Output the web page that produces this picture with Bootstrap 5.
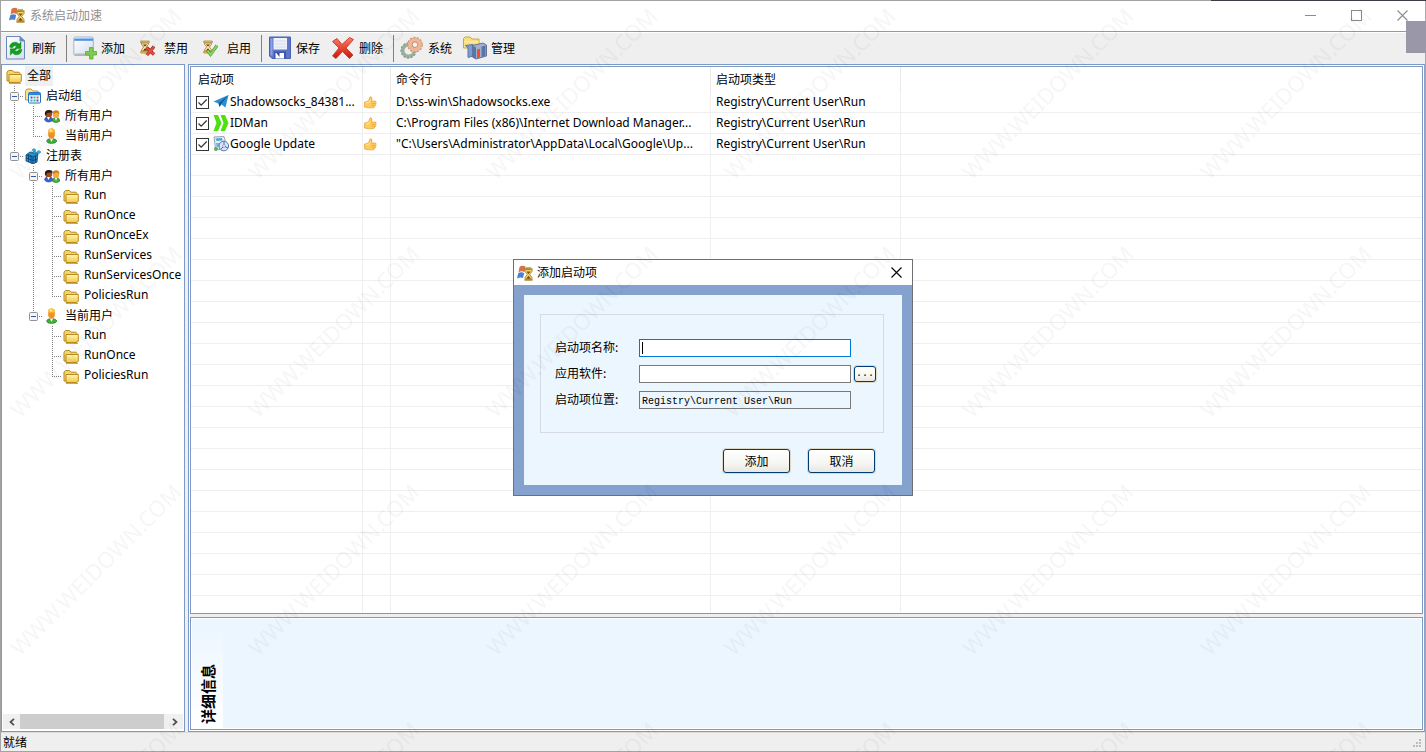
<!DOCTYPE html>
<html lang="zh-CN">
<head>
<meta charset="utf-8">
<meta name="viewport" content="width=device-width, initial-scale=1">
<title>系统启动加速</title>
<link href="https://cdn.jsdelivr.net/npm/bootstrap@5.3.0/dist/css/bootstrap.min.css" rel="stylesheet">
<style>
  :root { --edge: #7c99c6; --face: #efefef; --pale: #ebf6ff; --rule: #efefef; }
  body { font: 12px/20px "Noto Sans", "Noto Sans CJK SC", sans-serif; color: #000; background: var(--face); }
  svg { display: block; flex: none; }
  .zh { font-family: "Noto Sans CJK SC", sans-serif; }
  .app { border: 1px solid #a3a3a3; border-right-color: #a9a9ab; }

  .titlebar { height: 31px; background: #fff; border-bottom: 1px solid #999; color: #8f8f8f; }
  .caption { gap: 5px; padding: 0 0 2px 8px; }
  .winbtn { width: 46px; height: 28px; border: 0; background: none; padding: 0; display: flex; align-items: center; justify-content: center; }
  .toolbar-strip { height: 32px; border-top: 1px solid #fff; }
  .tool { border: 0; background: none; padding: 0 5px 0 6px; display: flex; align-items: center; gap: 4px; height: 29px; color: #000; }
  .tool:first-child { padding-left: 3px; }
  .tool-sep { width: 1px; height: 27px; background: #808080; margin: 2px 0 0 5px; }
  .side-mark { position: absolute; right: 0; top: 21px; width: 20px; height: 32px; background: #9997a8; }
  .top-mark { position: absolute; right: 0; top: 0; width: 215px; height: 1px; background: #3d3a44; }

  .sidebar { width: 184px; border: 1px solid var(--edge); background: #fff; }
  .tree { padding: 1px 0 0 3px; overflow: hidden; }
  .tree li { display: flex; align-items: center; height: 20px; white-space: nowrap; }
  .tree li > svg { margin: 0 5px 0 1px; }
  .tree a { color: #000; text-decoration: none; height: 20px; line-height: 18px; }
  .tree .picked { background: #efefef; padding: 0 2px; margin-left: -2px; }
  .ln { flex: none; width: 19px; height: 20px; display: flex; align-items: center; justify-content: center;
        --v: repeating-linear-gradient(#808080 0 1px, transparent 1px 2px) 9px 0;
        --h: repeating-linear-gradient(90deg, #808080 0 1px, transparent 1px 2px) 9px 10px / 10px 1px no-repeat; }
  .ln-v { background: var(--v) / 1px 100% no-repeat; }
  .ln-t { background: var(--v) / 1px 100% no-repeat, var(--h); }
  .ln-l { background: var(--v) / 1px 50% no-repeat, var(--h); }
  .knob { border: 0; padding: 0; background: none; }
  .hscroll { height: 15px; margin: 0 1px 2px; background: #f0f0f0; }
  .hscroll button { width: 17px; height: 15px; border: 0; padding: 0; background: none; display: flex; align-items: center; justify-content: center; }
  .thumb { background: #cdcdcd; margin-right: 2px; }

  .workarea { border: 1px solid var(--edge); border-right-color: #8aa3ca; padding: 1px; background: #fff; margin: 0 0 0 3px; }
  .listbox { border: 1px solid var(--edge); background: #fff; }
  .items { table-layout: fixed; width: 100%; border-collapse: separate; border-spacing: 0; }
  .items th { font-weight: 400; height: 25px; padding: 0 5px 2px; border-right: 1px solid #e9e9e9; }
  .items td { height: 21px; padding: 0 0 0 5px; border-right: 1px solid var(--rule); border-bottom: 1px solid var(--rule); white-space: nowrap; overflow: hidden; }
  .items th:last-child, .items td:last-child { border-right: 0; }
  .items th:first-child { padding-left: 7px; }
  .c1 { width: 172px; } .c2 { width: 28px; } .c3 { width: 320px; } .c4 { width: 190px; }
  .items .thumbcell { padding-left: 1px; }
  .items input { appearance: none; width: 13px; height: 13px; margin: 0 4px 0 0; border: 1px solid #333; background: #fff; flex: none; }
  .items input:checked { background: #fff url("data:image/svg+xml,%3Csvg xmlns='http://www.w3.org/2000/svg' viewBox='0 0 11 11'%3E%3Cpath d='M1.5 5.5l2.7 2.7L9.7 2.5' fill='none' stroke='%23333' stroke-width='1.2'/%3E%3C/svg%3E"); }
  .items label { display: flex; align-items: center; height: 20px; line-height: 20px; }
  .items label svg { margin-right: 1px; }
  .blankgrid { margin-bottom: 1px; background:
      linear-gradient(var(--rule) 0 0) 171px 0 / 1px 100% no-repeat,
      linear-gradient(var(--rule) 0 0) 199px 0 / 1px 100% no-repeat,
      linear-gradient(var(--rule) 0 0) 519px 0 / 1px 100% no-repeat,
      linear-gradient(var(--rule) 0 0) 709px 0 / 1px 100% no-repeat,
      repeating-linear-gradient(transparent 0 20px, var(--rule) 20px 21px); }
  .splitter { height: 3px; background: var(--face); }
  .details { height: 113px; border: 1px solid var(--edge); padding: 1px; background: #fff; }
  .details-body { background: var(--pale); }
  .details-tab { width: 31px; background: linear-gradient(var(--pale), #fff); }
  .details-tab span { writing-mode: vertical-rl; text-orientation: sideways; transform: rotate(180deg); font-size: 15px; font-weight: 700; line-height: 15px; padding: 4px 0; }

  .statusbar { height: 19px; border-top: 1px solid #ddd; padding-left: 2px; }

  .dialog-layer { position: absolute; inset: 3px 0 0 0; display: flex; align-items: center; justify-content: center; }
  .dlg { width: 400px; border: 1px solid #6e7076; background: #fff; }
  .dlg-title { height: 25px; padding-left: 3px; }
  .dlg-title button { width: 31px; height: 25px; border: 0; padding: 0; background: none; display: flex; align-items: center; justify-content: center; }
  .dlg-title span { line-height: 18px; padding-bottom: 2px; }
  .dlg-frame { border: 10px solid #85a1ce; background: var(--pale); padding: 19px 18px 12px 16px; }
  .dlg fieldset { border: 1px solid #d5dbe0; padding: 24px 7px 23px 14px; }
  .field { display: flex; align-items: center; height: 18px; margin-bottom: 8px; }
  .field:last-child { margin-bottom: 0; }
  .field label { width: 84px; line-height: 16px; padding-bottom: 2px; }
  .field input { width: 212px; height: 18px; border: 1px solid #7a7a7a; border-radius: 0; padding: 2px 2px 0; background: #fff; font: 10px/14px "Liberation Mono", monospace; color: #000; outline: 0; }
  .field input:read-only { background: #ebf6ff; }
  .field input.current { border-color: #0078d7; background: linear-gradient(#000 0 0) 2px 2px / 1px 12px no-repeat #fff; caret-color: transparent; }
  .xpbtn { border: 1px solid #003c74; border-radius: 3px; background: linear-gradient(#fff, #f6f6f3 60%, #e9e7e2); color: #000; padding: 0; box-shadow: 0 0 0 1px #ddd9c8; line-height: 16px; }
  .xpbtn-wide { width: 67px; height: 24px; }
  .xpbtn-dots { width: 22px; height: 16px; margin-left: 3px; font: 10px/14px "Liberation Mono", monospace; }
  .dlg-actions { gap: 18px; margin: 16px 9px 0 0; }
  .watermark { position: absolute; inset: 0; width: 100%; height: 100%; pointer-events: none; }
  .watermark text { font: 22px "Noto Sans", sans-serif; }
</style>
</head>
<body>
<svg width="0" height="0" class="position-absolute" aria-hidden="true">
  <defs>
    <linearGradient id="gold" x1="0" y1="0" x2="0" y2="1"><stop offset="0" stop-color="#fff6b4"/><stop offset="1" stop-color="#f2c84e"/></linearGradient>
    <linearGradient id="redg" x1="0" y1="0" x2="0" y2="1"><stop offset="0" stop-color="#ff7a60"/><stop offset="1" stop-color="#c8160c"/></linearGradient>
    <linearGradient id="sky" x1="0" y1="0" x2="1" y2="1"><stop offset="0" stop-color="#fff"/><stop offset="1" stop-color="#d3deef"/></linearGradient>
    <symbol id="i-folder" viewBox="0 0 16 16"><path d="M1 13V4.200L2.500 2.500H6.500L8 4.200H13L14 5.500V13z" fill="#f2d573" stroke="#b98a1c"/><path d="M3 6.500H15.300V13L14 14.500H3z" fill="url(#gold)" stroke="#b98a1c"/><path d="M3 15.500H15" stroke="#9a938a" stroke-width=".8"/></symbol>
    <symbol id="i-group" viewBox="0 0 16 16"><path d="M.5 12V3L2 1H6L8 3H13V12z" fill="#fbe48c" stroke="#c59a2e"/><rect x="3.500" y="4.500" width="12" height="10.500" rx="1" fill="#fff" stroke="#2371c4"/><path d="M3.500 6H15.500" stroke="#2f86e0" stroke-width="2.500"/><path d="M5.500 8.500h2v2h-2zM11.500 11.500h2v2h-2z" fill="#2d62c0"/><path d="M8.500 8.500h2v2h-2zM5.500 11.500h2v2h-2z" fill="#3aa3d8"/><path d="M11.500 8.500h2v2h-2z" fill="#e05a3a"/><path d="M8.500 11.500h2v2h-2z" fill="#4bb04b"/></symbol>
    <symbol id="i-users" viewBox="0 0 16 16"><path d="M.5 12Q1 8.500 4.500 8.500T9 12Q7 14 4.500 14T.5 12" fill="#3a62d8" stroke="#1a3690" stroke-width=".6"/><path d="M8 13Q8.500 9.500 12 9.500T16 13Q14 14.500 12 14.500T8 13" fill="#42b03a" stroke="#1f7a1c" stroke-width=".6"/><circle cx="4.700" cy="6" r="3.500" fill="#a04c1e"/><path d="M.8 6Q.8 1.800 5 2T8.500 5L7 4.500 3 5 2 8z" fill="#2c1a12"/><ellipse cx="12" cy="6.700" rx="3.200" ry="3.700" fill="#f5a94a"/><path d="M8.700 6Q8.500 2.400 12 2.300T15.400 6L13 4.500z" fill="#d08212"/><path d="M3 9l1.500 3L6 9M11 10l1 3 1-3" fill="#fff"/></symbol>
    <symbol id="i-user" viewBox="0 0 16 16"><path d="M2.500 13Q3 10.500 7.500 10.500T13 13Q12 15.500 7.500 15.500T2.500 13" fill="#3fae38" stroke="#1f7a1c" stroke-width=".6"/><path d="M5.800 10h3.400L7.500 14z" fill="#fff"/><path d="M4.200 3.500Q4 .5 7.500 .5T10.800 3.500V8Q9.500 11 7.500 11T4.200 8z" fill="#f0922a"/><path d="M4 4Q4 .5 7.500 .5T11 4Q7.500 5 4 4" fill="#fbc832"/><circle cx="7" cy="2.500" r="1.100" fill="#fff0a0"/></symbol>
    <symbol id="i-registry" viewBox="0 0 16 16"><path d="M1 7l4-3 8 1-1 9-4 2-7-3z" fill="#2a8ecb" stroke="#0c4a80" stroke-width=".8"/><path d="M1 10l7 2.500L12 11M1.500 7L8 9l5-2.500M3.500 6v8M6 7v8M8 9v7M10.500 8v7" stroke="#0d3e70" stroke-width=".8" fill="none"/><path d="M7 2l2-1.500L11 2 9 3.500zM12 3.500l2-1 2 1.500-2 1.500zM8 4l2-1 1 1.500-2 1z" fill="#35c0ee" stroke="#0c6aa8" stroke-width=".5"/></symbol>
    <symbol id="i-app" viewBox="0 0 16 16"><path d="M2.500 2Q5 0 8.500 1.500L7.500 7Q4.500 5.500 1.500 7.500z" fill="#dd6f45"/><path d="M1.200 8.300Q4 6.500 7.200 8L6 13Q3.500 12 0 13.500z" fill="#4a80cf"/><path d="M9 1.800Q11.500 3 14 1.500L13 6H8z" fill="#8dbb68"/><path d="M8 4.500H15V6.500L12.700 9.300 15 12.500V14.500H8V12.500L10.300 9.300 8 6.500z" fill="#f3d262" stroke="#9a7428" stroke-width=".8"/><path d="M9.500 6.500h4L11.500 9zM9 13.800l2.500-3L14 13.800z" fill="#7a4c18"/><path d="M7.500 4H15.500M7.500 15H15.500" stroke="#b8892c" stroke-width="1.400"/></symbol>
    <symbol id="i-hour" viewBox="0 0 12 16"><path d="M2 3H10V5L7.600 8 10 11V13H2V11L4.400 8 2 5z" fill="#ffe7a8" stroke="#a57434" stroke-width=".9"/><path d="M3.500 5h5L6 7.500zM3.500 12.500l2.500-3 2.500 3z" fill="#643610"/><rect x=".8" y=".8" width="10.400" height="2.200" rx=".6" fill="#f0c862" stroke="#96631c" stroke-width=".7"/><rect x=".8" y="13" width="10.400" height="2.300" rx=".6" fill="#f0c862" stroke="#96631c" stroke-width=".7"/></symbol>
    <symbol id="i-thumb" viewBox="0 0 14 14"><path d="M.5 6.500L3.500 6Q6 4 6.500 1Q8.600.2 8.600 3L8 5.500H12.500Q13.600 6.500 12.700 7.600Q13.300 9 12.200 9.600Q12.500 11 11.300 11.300Q11.200 12.700 9.500 12.700H5L.5 11.800z" fill="#ffcb5c" stroke="#e0a040" stroke-width=".8"/><path d="M8 8h4M8 10h3.500" stroke="#e69a2c" stroke-width=".7"/><path d="M2 7.500l3-.5 2-2.500" stroke="#ffe9a0" fill="none"/></symbol>
    <symbol id="i-knob" viewBox="0 0 9 9"><rect x=".5" y=".5" width="8" height="8" rx="1" fill="#f5f5f5" stroke="#919191"/><path d="M2 4.500H7" stroke="#3a57a5"/></symbol>
  </defs>
</svg>

<div class="app position-relative vh-100 d-flex flex-column">
  <header class="titlebar d-flex flex-shrink-0">
    <div class="caption d-flex align-items-center flex-grow-1">
      <svg width="16" height="16"><use href="#i-app"/></svg>
      <span class="zh">系统启动加速</span>
    </div>
    <button class="winbtn" aria-label="最小化"><svg width="11" height="11"><path d="M0 5.500H11" stroke="#8c8c8c"/></svg></button>
    <button class="winbtn" aria-label="最大化"><svg width="11" height="11"><rect x=".5" y=".5" width="10" height="10" fill="none" stroke="#8c8c8c"/></svg></button>
    <button class="winbtn" aria-label="关闭"><svg width="11" height="11"><path d="M.5.5l10 10M10.500.5l-10 10" stroke="#8c8c8c" stroke-width="1.100"/></svg></button>
  </header>

  <nav class="toolbar-strip zh d-flex align-items-start flex-shrink-0" aria-label="工具栏">
    <button class="tool"><svg width="24" height="24" viewBox="0 0 24 24"><path d="M2.500 .5H16L20.500 5V23H2.500z" fill="url(#sky)" stroke="#6d88bd"/><path d="M16 .5V5h4.500z" fill="#5f86cc" stroke="#6d88bd"/><path d="M5.500 11Q6.500 5.500 12.500 6.300L15 8 17 6V12.500H10.500L12.700 10.400Q10 8.500 8.200 12zM18 13.500Q17 19.500 11 18.700L8.500 17 6.300 19.200V12.800H12.800L10.700 14.800Q13.500 16.300 15 13.500z" fill="#12a01e" stroke="#0c7a16" stroke-width=".4"/></svg>刷新</button>
    <span class="tool-sep"></span>
    <button class="tool"><svg width="24" height="24" viewBox="0 0 24 24"><rect x=".8" y="1" width="19.500" height="18.500" rx="1.500" fill="url(#sky)" stroke="#a9b3c0"/><path d="M1.200 2.500H20V4.800H1.200z" fill="#4a92e4"/><path d="M2 18.500H20" stroke="#b5bbc4" stroke-width="2"/><path d="M16.500 11.500h3.500v4h3.500v3.500h-3.500v4h-3.500v-4h-4v-3.500h4z" fill="#7fcb4e" stroke="#58a838" stroke-width=".8"/></svg>添加</button>
    <button class="tool"><svg width="24" height="24" viewBox="0 0 24 24"><use href="#i-hour" x="4" y="4" width="10" height="14"/><path d="M10.500 11.500l7.500 7M18 10.500l-7 8.500" stroke="#b8221c" stroke-width="3.200"/><path d="M10.500 11.500l7.500 7M18 10.500l-7 8.500" stroke="#e8594c" stroke-width="1.600"/></svg>禁用</button>
    <button class="tool"><svg width="24" height="24" viewBox="0 0 24 24"><use href="#i-hour" x="4" y="4" width="10" height="14"/><path d="M8.500 14.500l3 4 6.500-9" fill="none" stroke="#4a9a30" stroke-width="3"/><path d="M8.500 14.500l3 4 6.500-9" fill="none" stroke="#8fd860" stroke-width="1.700"/></svg>启用</button>
    <span class="tool-sep"></span>
    <button class="tool"><svg width="24" height="24" viewBox="0 0 24 24"><path d="M1.500 1H22.500V22.500H4L1.500 20z" fill="#5f76c8" stroke="#4a60b0"/><path d="M2.500 2.500h2v17h-2z" fill="#8fa2e8"/><rect x="5.500" y="2" width="13.500" height="11.500" fill="#eef2fa"/><path d="M7 5H18M7 8H18M7 11H18" stroke="#d5dcea"/><path d="M6 15.500H18V22.500H6z" fill="#3f56a8"/><path d="M7.500 17h8.500v5.500H7.500z" fill="#fff"/><path d="M8.500 17h3v4z" fill="#31479c"/></svg>保存</button>
    <button class="tool"><svg width="24" height="24" viewBox="0 0 24 24"><path d="M1.500 5.500L6 2.500 11 8.500 18.500 1.500 22.500 3.500 15 12 22 19 18.500 22.500 11.500 15.500 5 22.500 1.500 20 8 12z" fill="url(#redg)" stroke="#c4392c" stroke-width=".9" stroke-linejoin="round"/></svg>删除</button>
    <span class="tool-sep"></span>
    <button class="tool"><svg width="24" height="24" viewBox="0 0 24 24" fill="none"><circle cx="8.500" cy="14.500" r="5.800" stroke="#9ab09c" stroke-width="3.500"/><circle cx="8.500" cy="14.500" r="7.500" stroke="#819c85" stroke-width="1.300" stroke-dasharray="2.200 1.500"/><circle cx="15" cy="8.700" r="5" stroke="#eeb698" stroke-width="4.400"/><circle cx="15" cy="8.700" r="7.300" stroke="#cf9478" stroke-width="1.200" stroke-dasharray="2.200 1.400"/><circle cx="15" cy="8.700" r="2.800" fill="#f6f2ec" stroke="#c98c70"/></svg>系统</button>
    <button class="tool"><svg width="24" height="24" viewBox="0 0 24 24"><path d="M.5 12V2.500L2 1H7l2 2h7v9z" fill="#f8df7e" stroke="#c9a548"/><path d="M1 6H16" stroke="#fff2a8"/><path d="M2.500 9.500L10 8.500V20L5 21.500V12z" fill="#7d9bcc" stroke="#5c78a8"/><path d="M9.500 9.500L20 7l3.500 2V20L13 23l-3.500-2z" fill="#a3b0cc" stroke="#66749a"/><path d="M9.500 9.500L13 11.500V23l-3.500-2z" fill="#5876ac"/><path d="M14 13.500l3-.8V21.500l-3 .8z" fill="#e85428"/><path d="M18.500 10.500l4-1V20l-4 1z" fill="#5a74a8"/></svg>管理</button>
  </nav>

  <main class="d-flex flex-grow-1 overflow-hidden">
    <aside class="sidebar d-flex flex-column flex-shrink-0">
      <ul class="tree list-unstyled mb-0 flex-grow-1">
        <li><svg width="16" height="16"><use href="#i-folder"/></svg><a href="#" class="picked zh">全部</a></li>
        <li><span class="ln ln-t"><button class="knob" aria-label="折叠"><svg width="9" height="9"><use href="#i-knob"/></svg></button></span><svg width="16" height="16"><use href="#i-group"/></svg><a href="#" class="zh">启动组</a></li>
        <li><span class="ln ln-v"></span><span class="ln ln-t"></span><svg width="16" height="16"><use href="#i-users"/></svg><a href="#" class="zh">所有用户</a></li>
        <li><span class="ln ln-v"></span><span class="ln ln-l"></span><svg width="16" height="16"><use href="#i-user"/></svg><a href="#" class="zh">当前用户</a></li>
        <li><span class="ln ln-l"><button class="knob" aria-label="折叠"><svg width="9" height="9"><use href="#i-knob"/></svg></button></span><svg width="16" height="16"><use href="#i-registry"/></svg><a href="#" class="zh">注册表</a></li>
        <li><span class="ln"></span><span class="ln ln-t"><button class="knob" aria-label="折叠"><svg width="9" height="9"><use href="#i-knob"/></svg></button></span><svg width="16" height="16"><use href="#i-users"/></svg><a href="#" class="zh">所有用户</a></li>
        <li><span class="ln"></span><span class="ln ln-v"></span><span class="ln ln-t"></span><svg width="16" height="16"><use href="#i-folder"/></svg><a href="#">Run</a></li>
        <li><span class="ln"></span><span class="ln ln-v"></span><span class="ln ln-t"></span><svg width="16" height="16"><use href="#i-folder"/></svg><a href="#">RunOnce</a></li>
        <li><span class="ln"></span><span class="ln ln-v"></span><span class="ln ln-t"></span><svg width="16" height="16"><use href="#i-folder"/></svg><a href="#">RunOnceEx</a></li>
        <li><span class="ln"></span><span class="ln ln-v"></span><span class="ln ln-t"></span><svg width="16" height="16"><use href="#i-folder"/></svg><a href="#">RunServices</a></li>
        <li><span class="ln"></span><span class="ln ln-v"></span><span class="ln ln-t"></span><svg width="16" height="16"><use href="#i-folder"/></svg><a href="#">RunServicesOnce</a></li>
        <li><span class="ln"></span><span class="ln ln-v"></span><span class="ln ln-l"></span><svg width="16" height="16"><use href="#i-folder"/></svg><a href="#">PoliciesRun</a></li>
        <li><span class="ln"></span><span class="ln ln-l"><button class="knob" aria-label="折叠"><svg width="9" height="9"><use href="#i-knob"/></svg></button></span><svg width="16" height="16"><use href="#i-user"/></svg><a href="#" class="zh">当前用户</a></li>
        <li><span class="ln"></span><span class="ln"></span><span class="ln ln-t"></span><svg width="16" height="16"><use href="#i-folder"/></svg><a href="#">Run</a></li>
        <li><span class="ln"></span><span class="ln"></span><span class="ln ln-t"></span><svg width="16" height="16"><use href="#i-folder"/></svg><a href="#">RunOnce</a></li>
        <li><span class="ln"></span><span class="ln"></span><span class="ln ln-l"></span><svg width="16" height="16"><use href="#i-folder"/></svg><a href="#">PoliciesRun</a></li>
      </ul>
      <div class="hscroll d-flex">
        <button aria-label="向左滚动"><svg width="6" height="8"><path d="M5 .8L1.500 4 5 7.200" fill="none" stroke="#505050" stroke-width="1.800"/></svg></button>
        <div class="thumb flex-grow-1"></div>
        <button aria-label="向右滚动"><svg width="6" height="8"><path d="M1 .8L4.500 4 1 7.200" fill="none" stroke="#505050" stroke-width="1.800"/></svg></button>
      </div>
    </aside>

    <section class="workarea d-flex flex-column flex-grow-1">
      <div class="listbox d-flex flex-column flex-grow-1 overflow-hidden">
        <table class="items">
          <colgroup><col class="c1"><col class="c2"><col class="c3"><col class="c4"><col></colgroup>
          <thead class="zh"><tr><th>启动项</th><th></th><th>命令行</th><th>启动项类型</th><th></th></tr></thead>
          <tbody>
            <tr>
              <td><label><input type="checkbox" checked><svg width="16" height="16" viewBox="0 0 16 16"><path d="M.5 7.500L15.500 1 12.500 13.500 8.500 10.500 6.500 13 5.500 9.500z" fill="#2a8fd0"/><path d="M5.500 9.500L15.500 1 8 10 6.500 13z" fill="#15588f"/></svg>Shadowsocks_84381...</label></td>
              <td class="thumbcell"><svg width="13" height="13"><use href="#i-thumb"/></svg></td><td>D:\ss-win\Shadowsocks.exe</td><td>Registry\Current User\Run</td><td></td>
            </tr>
            <tr>
              <td><label><input type="checkbox" checked><svg width="16" height="16" viewBox="0 0 16 16"><path d="M.5 0H5L8.500 8 5 16H.5L3.500 8zM7.500 0H12L15.500 8 12 16H7.500L10.500 8z" fill="#4fe010"/></svg>IDMan</label></td>
              <td class="thumbcell"><svg width="13" height="13"><use href="#i-thumb"/></svg></td><td>C:\Program Files (x86)\Internet Download Manager...</td><td>Registry\Current User\Run</td><td></td>
            </tr>
            <tr>
              <td><label><input type="checkbox" checked><svg width="16" height="16" viewBox="0 0 16 16"><path d="M1 1L11 .5l1.500 5L10 14 2.500 13z" fill="#e8eef6" stroke="#7d8b9c" stroke-width=".8"/><path d="M2.500 2.500l6.500-.5.5 2.500-6 .5z" fill="#49a8dc"/><path d="M3 7h4l.5 4h-4z" fill="#78b4dc"/><circle cx="3" cy="13" r="2" fill="#5cae5c"/><circle cx="10.800" cy="10" r="4.800" fill="#dbe7f6" stroke="#5b76ae"/><path d="M11 5.500v4.500l4 2M8 13l3-3" stroke="#486aa8" fill="none"/><circle cx="11" cy="10" r="1.400" fill="#fff" stroke="#5b76ae" stroke-width=".6"/></svg>Google Update</label></td>
              <td class="thumbcell"><svg width="13" height="13"><use href="#i-thumb"/></svg></td><td>"C:\Users\Administrator\AppData\Local\Google\Up...</td><td>Registry\Current User\Run</td><td></td>
            </tr>
          </tbody>
        </table>
        <div class="blankgrid flex-grow-1"></div>
      </div>
      <div class="splitter flex-shrink-0"></div>
      <div class="details flex-shrink-0">
        <div class="details-body h-100">
          <div class="details-tab h-100 d-flex align-items-end justify-content-center"><span class="zh">详细信息</span></div>
        </div>
      </div>
    </section>
  </main>

  <footer class="statusbar zh d-flex align-items-center justify-content-between flex-shrink-0">
    <span>就绪</span>
    <svg class="align-self-end mb-1 me-1" width="8" height="8" fill="#bdbdbd"><path d="M6 0h2v2H6zM3 3h2v2H3zM6 3h2v2H6zM0 6h2v2H0zM3 6h2v2H3zM6 6h2v2H6z"/></svg>
  </footer>
</div>

<div class="top-mark"></div>
<div class="side-mark"></div>

<div class="dialog-layer">
  <form class="dlg zh" role="dialog" aria-labelledby="dlgTitle">
    <div class="dlg-title d-flex align-items-center gap-1">
      <svg width="16" height="16"><use href="#i-app"/></svg>
      <span id="dlgTitle" class="flex-grow-1">添加启动项</span>
      <button type="button" aria-label="关闭"><svg width="11" height="11"><path d="M.5.5l10 10M10.500.5l-10 10" stroke="#000" stroke-width="1.100"/></svg></button>
    </div>
    <div class="dlg-frame">
      <fieldset>
        <div class="field"><label for="itemName">启动项名称:</label><input id="itemName" class="current" type="text" value="" autofocus></div>
        <div class="field"><label for="itemApp">应用软件:</label><input id="itemApp" type="text"><button type="button" class="xpbtn xpbtn-dots" aria-label="浏览">...</button></div>
        <div class="field"><label for="itemPlace">启动项位置:</label><input id="itemPlace" type="text" readonly value="Registry\Current User\Run"></div>
      </fieldset>
      <div class="dlg-actions d-flex justify-content-end">
        <button type="button" class="xpbtn xpbtn-wide">添加</button>
        <button type="button" class="xpbtn xpbtn-wide">取消</button>
      </div>
    </div>
  </form>
</div>

<svg class="watermark" aria-hidden="true">
  <defs><pattern id="wm" width="238" height="238" patternUnits="userSpaceOnUse"><text x="20" y="181" transform="rotate(-45 20 181)" fill="#000" fill-opacity=".035">WWW.WEIDOWN.COM</text></pattern></defs>
  <rect width="100%" height="100%" fill="url(#wm)"/>
</svg>
<script src="https://cdn.jsdelivr.net/npm/bootstrap@5.3.0/dist/js/bootstrap.bundle.min.js"></script>
</body>
</html>
